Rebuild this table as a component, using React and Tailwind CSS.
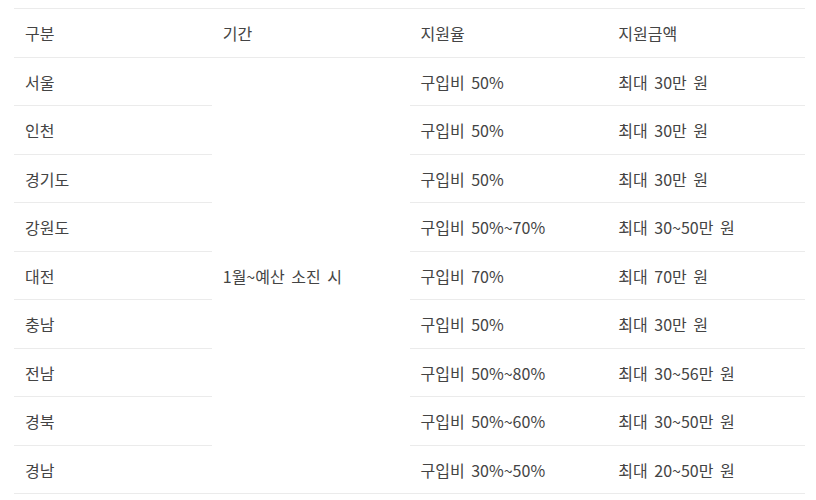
import React from "react";

const rows = [
  ["서울", "구입비 50%", "최대 30만 원"],
  ["인천", "구입비 50%", "최대 30만 원"],
  ["경기도", "구입비 50%", "최대 30만 원"],
  ["강원도", "구입비 50%~70%", "최대 30~50만 원"],
  ["대전", "구입비 70%", "최대 70만 원"],
  ["충남", "구입비 50%", "최대 30만 원"],
  ["전남", "구입비 50%~80%", "최대 30~56만 원"],
  ["경북", "구입비 50%~60%", "최대 30~50만 원"],
  ["경남", "구입비 30%~50%", "최대 20~50만 원"],
];

const cell = "flex items-center pl-[11px] pt-[1px] border-b border-[#ebebeb]";

export default function App() {
  return (
    <div
      className="bg-white w-[816px] h-[500px] pt-[8px] pl-[14px] text-[16px] text-[#444] [word-spacing:3px]"
      style={{ fontFamily: '"Noto Sans CJK KR", "Noto Sans", sans-serif' }}
    >
      <div className="grid grid-cols-4 w-[791px] border-t border-[#ebebeb] auto-rows-[48.5px]">
        <div className={cell}>구분</div>
        <div className={cell}>기간</div>
        <div className={cell}>지원율</div>
        <div className={cell}>지원금액</div>
        {rows.map((r, i) => (
          <React.Fragment key={i}>
            <div className={cell} style={{ gridColumn: 1, gridRow: i + 2 }}>{r[0]}</div>
            {i === 0 && (
              <div className={`${cell} col-start-2 row-start-2 row-span-9`}>1월~예산 소진 시</div>
            )}
            <div className={cell} style={{ gridColumn: 3, gridRow: i + 2 }}>{r[1]}</div>
            <div className={cell} style={{ gridColumn: 4, gridRow: i + 2 }}>{r[2]}</div>
          </React.Fragment>
        ))}
      </div>
    </div>
  );
}
